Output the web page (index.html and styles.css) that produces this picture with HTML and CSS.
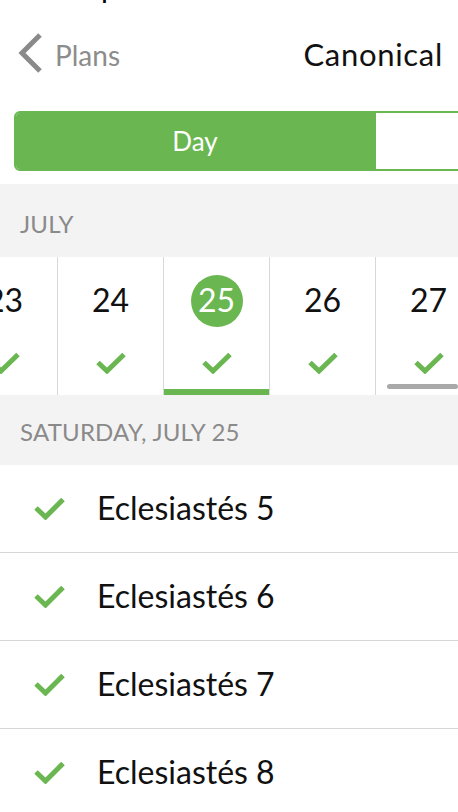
FILE: index.html
```html
<!DOCTYPE html>
<html lang="es">
<head>
<meta charset="utf-8">
<title>Canonical</title>
<link rel="stylesheet" href="styles.css">
</head>
<body>
<div class="screen">
  <div class="topclip"><span class="toptext">p</span></div>
  <header class="nav">
    <a class="back" href="#">
      <svg class="chev" width="26" height="42" viewBox="0 0 26 42" aria-hidden="true">
        <polyline points="23,3 5,21 23,39" fill="none" stroke="#8a8a8a" stroke-width="5"/>
      </svg>
      <span class="back-label">Plans</span>
    </a>
    <h1 class="title">Canonical</h1>
  </header>

  <div class="seg-wrap">
    <div class="seg">
      <div class="seg-item active">Day</div>
      <div class="seg-item"></div>
    </div>
  </div>

  <div class="section-head month">JULY</div>

  <div class="days">
    <div class="day"><div class="num">23</div><svg class="dcheck" width="30" height="22" viewBox="0 0 30 22"><polyline points="2,10.5 11,19 28,2.5" fill="none" stroke="#6ab651" stroke-width="5"/></svg></div>
    <div class="day"><div class="num">24</div><svg class="dcheck" width="30" height="22" viewBox="0 0 30 22"><polyline points="2,10.5 11,19 28,2.5" fill="none" stroke="#6ab651" stroke-width="5"/></svg></div>
    <div class="day selected"><div class="num">25</div><svg class="dcheck" width="30" height="22" viewBox="0 0 30 22"><polyline points="2,10.5 11,19 28,2.5" fill="none" stroke="#6ab651" stroke-width="5"/></svg></div>
    <div class="day"><div class="num">26</div><svg class="dcheck" width="30" height="22" viewBox="0 0 30 22"><polyline points="2,10.5 11,19 28,2.5" fill="none" stroke="#6ab651" stroke-width="5"/></svg></div>
    <div class="day today"><div class="num">27</div><svg class="dcheck" width="30" height="22" viewBox="0 0 30 22"><polyline points="2,10.5 11,19 28,2.5" fill="none" stroke="#6ab651" stroke-width="5"/></svg></div>
  </div>

  <div class="section-head date">SATURDAY, JULY 25</div>

  <ul class="readings">
    <li class="reading"><svg class="lcheck" width="31" height="23" viewBox="0 0 31 23"><polyline points="2,11 11.5,20 29,2.5" fill="none" stroke="#6ab651" stroke-width="5"/></svg><span class="ref">Eclesiastés 5</span></li>
    <li class="reading"><svg class="lcheck" width="31" height="23" viewBox="0 0 31 23"><polyline points="2,11 11.5,20 29,2.5" fill="none" stroke="#6ab651" stroke-width="5"/></svg><span class="ref">Eclesiastés 6</span></li>
    <li class="reading"><svg class="lcheck" width="31" height="23" viewBox="0 0 31 23"><polyline points="2,11 11.5,20 29,2.5" fill="none" stroke="#6ab651" stroke-width="5"/></svg><span class="ref">Eclesiastés 7</span></li>
    <li class="reading"><svg class="lcheck" width="31" height="23" viewBox="0 0 31 23"><polyline points="2,11 11.5,20 29,2.5" fill="none" stroke="#6ab651" stroke-width="5"/></svg><span class="ref">Eclesiastés 8</span></li>
  </ul>
</div>
</body>
</html>
```

FILE: styles.css
```css
* { box-sizing: border-box; }
html, body {
  margin: 0;
  padding: 0;
  background: #ffffff;
}
body {
  font-family: Lato, "Noto Sans", sans-serif;
  font-weight: 400;
  color: #111111;
  overflow: hidden;
}
.screen {
  width: 458px;
  height: 812px;
  overflow: hidden;
  background: #ffffff;
}

/* clipped previous line at the very top */
.topclip {
  height: 4px;
  overflow: hidden;
  padding-left: 101px;
}
.toptext {
  display: block;
  font-size: 30px;
  line-height: 30px;
  margin-top: -29px;
  color: #000;
}

/* nav bar */
.nav {
  height: 97px;
  display: flex;
  align-items: center;
  justify-content: space-between;
  padding: 0 15px 0 17px;
}
.back {
  display: flex;
  align-items: center;
  gap: 12px;
  text-decoration: none;
  color: #8c8c8c;
}
.chev { display: block; }
.back-label {
  font-size: 28px;
  line-height: 34px;
  padding-top: 4px;
}
.title {
  margin: 0;
  font-size: 31px;
  font-weight: 400;
  line-height: 36px;
  padding-top: 3px;
  letter-spacing: 0.7px;
  color: #111;
}

/* segmented control */
.seg-wrap {
  padding: 10px 0 13px 14px;
}
.seg {
  display: flex;
  width: 724px;
  height: 60px;
  border: 2px solid #6ab651;
  border-radius: 6px;
  overflow: hidden;
}
.seg-item {
  flex: 0 0 360px;
  display: flex;
  align-items: center;
  justify-content: center;
  font-size: 26px;
  color: #6ab651;
}
.seg-item.active {
  background: #6ab651;
  color: #ffffff;
  margin: -2px 0 -2px -2px;
  flex-basis: 362px;
}

/* section headers */
.section-head {
  background: #f3f3f3;
  color: #8a8a8a;
  font-size: 24px;
  letter-spacing: 0.2px;
  padding-left: 20px;
  display: flex;
  align-items: center;
}
.month { height: 73px; padding-top: 6px; }
.date { height: 70px; padding-top: 3px; }

/* day strip */
.days {
  display: flex;
  height: 138px;
  margin-left: -49px;
  background: #fff;
}
.day {
  position: relative;
  flex: 0 0 106px;
  border-left: 1px solid #d8d8d8;
  display: flex;
  flex-direction: column;
  align-items: center;
  padding-top: 18px;
}
.num {
  width: 52px;
  height: 52px;
  border-radius: 50%;
  text-align: center;
  font-size: 32px;
  line-height: 50px;
  color: #111;
}
.selected .num {
  background: #6ab651;
  color: #fff;
}
.dcheck {
  display: block;
  margin-top: 25px;
}
.selected::after {
  content: "";
  position: absolute;
  left: 0;
  right: 0;
  bottom: 0;
  height: 6px;
  background: #6ab651;
}
.today::after {
  content: "";
  position: absolute;
  left: 11px;
  width: 71px;
  bottom: 6px;
  height: 5px;
  border-radius: 3px;
  background: #a9a9a9;
}

/* readings list */
.readings {
  list-style: none;
  margin: 0;
  padding: 0;
  background: #fff;
  border-top-left-radius: 5px;
}
.reading {
  height: 88px;
  border-bottom: 1px solid #d6d6d6;
  display: flex;
  align-items: center;
  padding-left: 34px;
}
.lcheck {
  display: block;
  flex: 0 0 auto;
}
.ref {
  margin-left: 32px;
  font-size: 32px;
  line-height: 40px;
  padding-bottom: 2px;
  color: #111;
}
```
